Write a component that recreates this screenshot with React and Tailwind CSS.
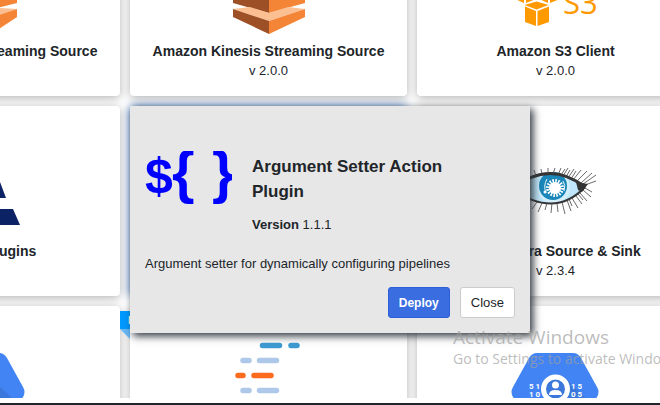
const Kinesis = () => (
  <svg viewBox="0 0 277 100" className="h-[100px] w-full" aria-hidden="true">
    <path d="M103 42l36-10v40l-36-10z" fill="#9d5025" />
    <path d="M139 32l36 10v20l-36 10z" fill="#f58536" />
    <path d="M103 68l17-2 19 6 19-6 17 2-36 12z" fill="#fcbf92" />
    <path d="M103 68l36 12v13l-36-17z" fill="#9d5025" />
    <path d="M175 68l-36 12v13l36-17z" fill="#f58536" />
  </svg>
);

const KinesisWide = () => (
  <svg viewBox="0 0 277 100" className="h-[100px] w-full" aria-hidden="true">
    <path d="M102 42l36-10 36 10v20l-36 9-36-9z" fill="#f58536" />
    <path d="M138 71l19-4 17 1-36 13z" fill="#fcbf92" />
    <path d="M174 68l-36 12v20l36-24z" fill="#f58536" />
  </svg>
);

const S3 = () => (
  <svg viewBox="0 0 277 100" className="h-[100px] w-full" aria-hidden="true">
    <g fill="#ff9900">
      <path d="M96 40l11 4v18l-11-5zM109 44l10-4v18l-10 4z" />
      <path d="M120 40l11 4v18l-11-5zM133 44l10-4v18l-10 4z" />
      <path d="M119.500 60.500l12 3.500-12 4.500-12-4.500z" />
      <path d="M108 65.500l11 4.500v15l-11-4zM120.500 70l11.500-4.500v15.500l-11.500 4z" />
      <text x="146" y="73" fontFamily="Open Sans, sans-serif" fontSize="31">S3</text>
    </g>
  </svg>
);

const Anaplan = () => (
  <svg viewBox="0 0 277 100" className="h-[100px] w-full" aria-hidden="true">
    <path d="M135 4h8l20 53h-26zM138 68h32l7 16h-39z" fill="#0b2265" />
  </svg>
);

const LASHES =
  "M113 37l-3-5M119 35l-2-6M125 33l-1-5M131 33l0-6M136 33l2-6M141 34l3-7M144 34l4-6M146 35l5-8M149 36l4-7M151 37l6-9M154 38l5-8M156 39l8-10M160 40l10-10M164 42l11-10M166 43l13-9M168 44l11-4M168 47l7 4M166 49l8 7M163 52l7 8M161 53l5 6M159 55l6 8M155 57l6 10M152 58l3 7M150 59l4 11M145 61l3 12M140 62l1 9M135 62l-1 10M130 62l-2 7M125 62l-4 9M120 61l-5 7M114 58l-6 7";

const Eye = () => (
  <svg viewBox="0 0 277 100" className="h-[100px] w-full" aria-hidden="true">
    <path d="M95 48Q132 18 168 46Q138 78 95 48z" fill="#bfe6fa" />
    <circle cx="137" cy="47" r="16" fill="#d3effc" />
    <circle cx="136" cy="45" r="14" fill="#1b86b8" />
    <circle cx="138" cy="47" r="6" fill="#fff" />
    <circle cx="138" cy="47" r="7" fill="none" stroke="#fff" strokeWidth="4" strokeDasharray="1.500 1.250" />
    <path d="M130 38q-4 7-1 14M146 40q3 4 1 10" fill="none" stroke="#e9f7fe" strokeWidth="1" />
    <circle cx="128" cy="51" r="1.500" fill="#fff" />
    <path d="M95 48Q132 18 168 46" fill="none" stroke="#333" strokeWidth="3" />
    <path d="M168 46Q138 78 95 48" fill="none" stroke="#333" strokeWidth="2" />
    <path d={LASHES} stroke="#444" strokeWidth="0.800" fill="none" />
    <path d="M159 41l12 2-6 8-4-2z" fill="#333" />
  </svg>
);

const Bars = () => (
  <svg viewBox="0 0 277 100" className="h-[100px] w-full" aria-hidden="true">
    <g strokeWidth="5.500" strokeLinecap="round">
      <path d="M132.500 4.500h17M161 4.500h6" stroke="#3d9bd1" />
      <path d="M113 19.500h6M129.500 19.500h17M113 49.500h6M129.500 49.500h17" stroke="#adc8e8" />
      <path d="M108 34.500h5M124 34.500h17" stroke="#fd6b1f" />
    </g>
  </svg>
);

const Hex = ({ detailed }) => (
  <svg viewBox="0 0 277 100" className="h-[100px] w-full" aria-hidden="true">
    <path d="M120 12h36q5 0 8 5l16 29q3 5 0 10l-16 29q-3 5-8 5h-36q-5 0-8-5l-16-29q-3-5 0-10l16-29q3-5 8-5z" fill="#4284f3" />
    <path d="M148 37l28 27-13 22-40-20z" fill="#3c78dc" />
    {detailed && (
      <>
        <circle cx="138.500" cy="48" r="12" fill="#3c78dc" stroke="#fff" strokeWidth="5" />
        <circle cx="138.500" cy="44" r="3.500" fill="#fff" />
        <path d="M132 54q0-5 6.500-5t6.500 5z" fill="#fff" />
        <g fill="#fff" fontFamily="Roboto, sans-serif" fontSize="8" fontWeight="700">
          <text x="112" y="48" letterSpacing="2">51</text>
          <text x="112" y="56" letterSpacing="2">10</text>
          <text x="154" y="48" letterSpacing="2">15</text>
          <text x="154" y="56" letterSpacing="2">05</text>
        </g>
      </>
    )}
  </svg>
);

const Card = ({ icon, name, version, active, isNew, children }) => (
  <li className={active || isNew ? "relative" : ""}>
    <article
      className={
        active
          ? "h-full rounded bg-white pt-[35px] text-center shadow-[0_0_10px_#3f75bb]"
          : "h-full rounded bg-white pt-[35px] text-center shadow-[0_2px_10px_rgba(0,0,0,0.3)]"
      }
    >
      {icon}
      {name && <h2 className="text-sm leading-5 font-bold">{name}</h2>}
      {version && <p className="leading-5">{version}</p>}
    </article>
    {isNew && (
      <div className="absolute top-[5px] -left-[10px]">
        <span className="block h-[18px] bg-[#0099ff] px-2 text-[11px] leading-[18px] font-bold text-white">NEW</span>
        <svg width="10" height="10" aria-hidden="true">
          <path d="M0 0h10v10z" fill="#66b8f5" />
        </svg>
      </div>
    )}
    {children}
  </li>
);

const PluginDialog = () => (
  <section
    role="dialog"
    aria-labelledby="plugin-name"
    className="absolute top-0 left-0 z-10 w-[400px] bg-[#e7e7e7] px-[15px] pt-[45px] pb-[15px] shadow-[3px_3px_8px_#2b333b]"
  >
    <div className="flex gap-5">
      <svg viewBox="0 0 87 60" className="h-[60px] w-[87px] shrink-0" aria-hidden="true">
        <g fill="#0000ff" fontFamily="Liberation Sans, Arial, sans-serif" fontWeight="700">
          <text x="0" y="42" fontSize="50">$</text>
          <text x="27" y="41" fontSize="58">{"{"}</text>
          <text x="67" y="41" fontSize="58">{"}"}</text>
        </g>
      </svg>
      <div className="max-w-[220px]">
        <h1 id="plugin-name" className="pt-[3px] text-[17px] leading-[25px] font-bold">
          Argument Setter Action Plugin
        </h1>
        <p className="mt-[11px] leading-5">
          <strong>Version</strong> 1.1.1
        </p>
      </div>
    </div>
    <p className="mt-[19px] leading-5">Argument setter for dynamically configuring pipelines</p>
    <div className="mt-[13px] flex justify-end gap-[10px]">
      <button className="h-[31px] rounded-[3px] border border-[#2f5fd8] bg-[#3a6de0] px-[10px] text-xs font-bold text-white">Deploy</button>
      <button className="h-[31px] rounded-[3px] border border-[#cccccc] bg-white px-[10px]">Close</button>
    </div>
  </section>
);

export default function App() {
  return (
    <main className="relative flex h-screen flex-col overflow-hidden border-b-2 border-[#212429] bg-white pb-[5px] font-['Liberation_Sans',Arial,sans-serif] text-[13px] text-[#212529]">
      <div className="min-h-0 flex-1 overflow-hidden">
        <ul className="-mt-[94px] -ml-[157px] grid auto-rows-[190px] grid-cols-[repeat(3,277px)] gap-[10px]">
          <Card icon={<KinesisWide />} name="Amazon Kinesis Streaming Source" />
          <Card icon={<Kinesis />} name="Amazon Kinesis Streaming Source" version="v 2.0.0" />
          <Card icon={<S3 />} name="Amazon S3 Client" version="v 2.0.0" />
          <Card icon={<Anaplan />} name="Anaplan Plugins" />
          <Card active>
            <PluginDialog />
          </Card>
          <Card icon={<Eye />} name="Cassandra Source & Sink" version="v 2.3.4" />
          <Card icon={<Hex />} />
          <Card icon={<Bars />} isNew />
          <Card icon={<Hex detailed />} />
        </ul>
      </div>
      <div className="pointer-events-none absolute top-[325px] left-[453px] z-20 font-['Open_Sans',sans-serif] whitespace-nowrap text-[#a0a0a0]/70">
        <p className="text-[19px] leading-6">Activate Windows</p>
        <p className="text-sm leading-5">Go to Settings to activate Windows.</p>
      </div>
    </main>
  );
}
